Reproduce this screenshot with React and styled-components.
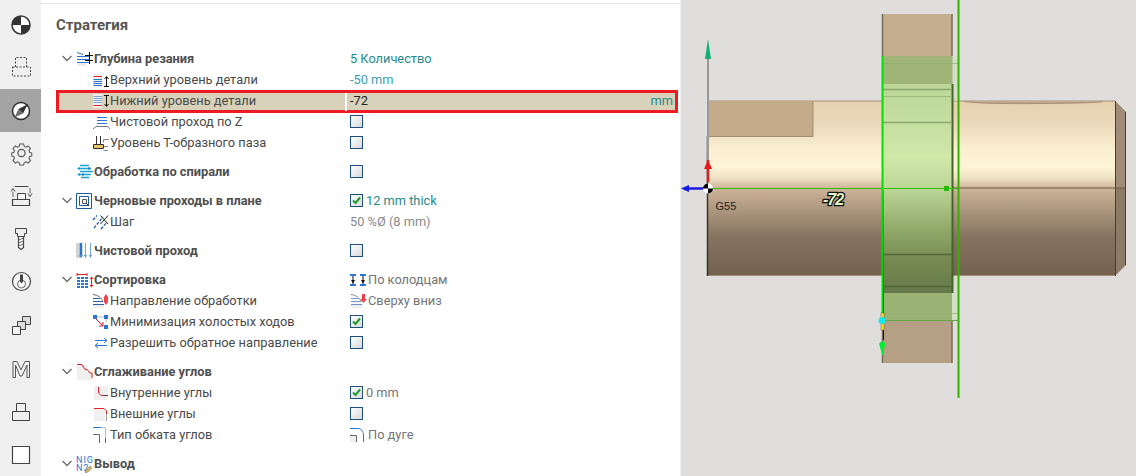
import styled, { createGlobalStyle } from "styled-components";

const GlobalStyle = createGlobalStyle`
  html, body {
    margin: 0;
    padding: 0;
    height: 476px;
    overflow: hidden;
    background: #fff;
  }
`;

const BLUE = "#2a76d2";
const RED = "#e0202a";

// sidebar drawings, 26x26
const sideIcons = {
  origin: (
    <>
      <circle cx="13" cy="13" r="9" fill="#fff" stroke="#3c3c3c" strokeWidth="1.600" />
      <path d="M13 13V4a9 9 0 0 0-9 9zM13 13v9a9 9 0 0 0 9-9z" fill="#333" />
    </>
  ),
  stock: (
    <path
      d="M7.500 12V2.500H18.500V12M4.500 12H22.500V21H4.500Z"
      fill="none"
      stroke="#444"
      strokeDasharray="2 1.500"
    />
  ),
  compass: (
    <>
      <circle cx="13" cy="13" r="8.500" fill="#fff" stroke="#2c2c2c" strokeWidth="1.500" />
      <path d="M20 6L15 15.500L10.500 11Z" fill="#333" />
      <path d="M6.500 19.500L10.500 11L15 15.500Z" fill="#6e6e6e" />
    </>
  ),
  gear: (
    <>
      <path
        d="M11.400 2.500h4.200l.6 2.700 1.900.9 2.400-1.400 2.500 2.900-1.600 2.200.6 1.800 2.400.9v3l-2.400.9-.6 1.800 1.600 2.200-2.500 2.900-2.400-1.400-1.900.9-.6 2.700h-4.200l-.6-2.700-1.900-.9-2.400 1.400-2.500-2.900 1.600-2.200-.6-1.800-2.400-.9v-3l2.400-.9.6-1.800-1.600-2.200 2.500-2.900 2.400 1.400 1.900-.9z"
        transform="translate(1.300 .6) scale(.92)"
        fill="none"
        stroke="#555"
        strokeWidth="1.100"
      />
      <circle cx="13.500" cy="12" r="3.600" fill="none" stroke="#555" strokeWidth="1.200" />
    </>
  ),
  setup: (
    <>
      <path d="M6.500 2.500H20.500" stroke="#444" fill="none" />
      <path d="M9.500 15.500V9.500H17.500V15.500" fill="#f6f6f6" stroke="#444" />
      <path d="M4.500 15.500H21.500V21.500H4.500Z" fill="none" stroke="#444" strokeWidth="1.200" />
      <path d="M5 5V13M22 4V12" stroke="#666" />
      <path d="M3 7.500L5 4.500L7 7.500M20 9.500L22 12.500L24 9.500" fill="#fff" stroke="#444" />
    </>
  ),
  tool: (
    <>
      <path d="M7.500 1.500H18.500V6.500H16.500V9.500H9.500V6.500H7.500Z" fill="#eee" stroke="#444" />
      <path d="M10.500 9.500H15.500V20.500L13 22.500L10.500 20.500Z" fill="#fff" stroke="#444" strokeWidth="1.200" />
      <path d="M10.500 13L15.500 11M10.500 16L15.500 14M10.500 19L15.500 17" stroke="#666" />
    </>
  ),
  dial: (
    <>
      <circle cx="13.500" cy="11.500" r="9" fill="#f6f6f6" stroke="#444" strokeWidth="1.200" />
      <circle cx="13.500" cy="14" r="4" fill="#fff" stroke="#666" />
      <path d="M12 4.500h3v7l-1.500 2l-1.500-2z" fill="#444" />
    </>
  ),
  copies: (
    <>
      <path d="M14.500 3.500H22.500V11.500H14.500Z" fill="#ddd" stroke="#444" />
      <path d="M9.500 8.500H17.500V16.500H9.500Z" fill="#ddd" stroke="#444" />
      <path d="M4.500 13.500H12.500V21.500H4.500Z" fill="#f4f4f4" stroke="#444" />
    </>
  ),
  machine: (
    <path
      d="M5 5.500H9L13 14L17 5.500H21.500V21.500H19V9L14 20H12L7.500 9V21.500H5Z"
      fill="#f4f4f4"
      stroke="#555"
    />
  ),
  stack: (
    <>
      <path d="M8.500 12.500V4.500H17.500V12.500" fill="none" stroke="#444" />
      <path d="M4.500 12.500H21.500V21.500H4.500Z" fill="none" stroke="#444" />
    </>
  ),
  square: <path d="M4.500 4.500H21.500V21.500H4.500Z" fill="#fff" stroke="#444" strokeWidth="1.200" />,
};

// property icons, 18x16
const rowIcons = {
  depth: (
    <>
      <path d="M1 1.500L7 3.500M1 5.500H13M1 8.500H13M1 11.500H13" stroke={BLUE} fill="none" />
      <path d="M1 12h9v3H1z" fill="#eee" />
      <path d="M13.500 1V13M9 4.500H17M9 9.500H17" stroke="#111" />
    </>
  ),
  top: (
    <>
      <path d="M1 2h9v13H1z" fill="#eee" />
      <path d="M1.500 4.500H10" stroke={RED} />
      <path d="M1.500 7.500H10M1.500 9.500H10M1.500 11.500H10M1.500 13.500H10" stroke={BLUE} />
      <path d="M14.500 5V15M12 14.500H17M12.500 7L14.500 4.500L16.500 7" stroke="#111" fill="none" />
    </>
  ),
  bottom: (
    <>
      <path d="M1 1h9v14H1z" fill="#eee" />
      <path d="M1.500 3.500H10M1.500 5.500H10M1.500 7.500H10M1.500 9.500H10" stroke="#7aa6dc" />
      <path d="M1.500 12.500H10" stroke={RED} />
      <path d="M14.500 3V13M12 2.500H17M12.500 11L14.500 13.500L16.500 11" stroke="#111" fill="none" />
    </>
  ),
  finishZ: (
    <>
      <path d="M5 3.500H15M5 6.500H15M5 9.500H15" stroke={BLUE} />
      <path d="M1 15L4 12.500H16L18 15" stroke="#777" fill="none" />
    </>
  ),
  tslot: (
    <>
      <path d="M4.500 1V9M8.500 1V9" stroke="#333" fill="none" />
      <path d="M1.500 9.500H11.500V13.500H1.500Z" fill="#e8c468" stroke="#333" />
      <path d="M17 4.500H11.500V7.500M12 11.500H16M11.500 15.500H16" stroke="#888" fill="none" />
    </>
  ),
  spiral: (
    <>
      <path d="M4 1.500H13M2 4.500H15M4 7.500H17M2 10.500H15M5 13.500H13" stroke="#1a9fd8" strokeWidth="1.300" />
      <path d="M1 4.500L4 3V6ZM1 10.500L4 9V12Z" fill="#1a9fd8" />
      <path d="M13 3V6M7 9V12" stroke="#0d6fb0" />
    </>
  ),
  pocket: (
    <>
      <path d="M.500.500H15.500V15.500H.500Z" fill="#fff" stroke="#1b5c9e" />
      <path d="M3.500 3.500H12.500V12.500H3.500Z" fill="none" stroke="#1b5c9e" />
      <path d="M6.500 6.500H10.500V10.500H6.500Z" fill="none" stroke="#555" />
      <path d="M10 10L13 13" stroke="#333" />
    </>
  ),
  step: (
    <>
      <path d="M1 6L5 1.500M2 14L11 3M9 15L15 8" stroke="#1b5c9e" strokeWidth="1.300" strokeDasharray="3 1.500" />
      <path d="M8.500 1.500L16 10M16 1.500L8.500 10" stroke="#222" />
    </>
  ),
  finish: (
    <>
      <path d="M0 0h4v15H0z" fill="#d4d4d4" />
      <path d="M5 0V14" stroke={BLUE} strokeWidth="2.500" />
      <path d="M9.500 0V13M14.500 0V13" stroke="#7aa6dc" />
      <path d="M3 12L5 15.500L7 12M8 12L9.500 15L11 12M13 12L14.500 15L16 12" fill="#5a92d8" />
    </>
  ),
  sort: (
    <>
      <path d="M1 2.500H11M1 1V4M11 1V4" stroke={RED} fill="none" />
      <path
        d="M1 5h3v2H1zM5 5h3v2H5zM9 5h3v2H9zM1 8h3v2H1zM5 8h3v2H5zM9 8h3v2H9zM1 11h3v2H1zM5 11h3v2H5zM9 11h3v2H9zM1 14h3v2H1zM5 14h3v2H5zM9 14h3v2H9z"
        fill={BLUE}
      />
      <path d="M15.500 5V15" stroke={RED} />
      <path d="M13.500 7L15.500 4.500L17.500 7ZM13.500 13L15.500 15.500L17.500 13Z" fill={RED} />
    </>
  ),
  direction: (
    <>
      <path d="M1 1.500C6 2 10 5 11 9" stroke="#666" fill="none" />
      <path d="M1 5.500H8M1 8.500H11M1 11.500H12" stroke="#2d5f9e" />
      <path d="M1 12h11v3H1z" fill="#eee" />
      <path d="M14 1l2 3v5l-2 3l-2-3V4z" fill="#f0404a" />
    </>
  ),
  directionValue: (
    <>
      <path d="M1 1.500C6 2 10 5 11 9" stroke="#888" fill="none" />
      <path d="M1 5.500H8M1 8.500H11M1 11.500H12" stroke="#6f95c8" />
      <path d="M1 12h11v3H1z" fill="#eee" />
      <path d="M12 1h3v5h2l-3.500 4L10 6h2z" fill="#f0404a" />
    </>
  ),
  rapid: (
    <>
      <path d="M1 1h4v4H1zM12 1h4v4h-4zM12 11h4v4h-4z" fill={BLUE} />
      <path d="M5 3H12M14 5V8" stroke="#bbb" />
      <path d="M4 5L11 12M11 8V12H7" stroke={RED} fill="none" />
    </>
  ),
  reverse: (
    <>
      <path d="M3 5.500H15M12 3L15 5.500L12 8" stroke={BLUE} fill="none" />
      <path d="M15 10.500H3M6 8L3 10.500L6 13" stroke={BLUE} fill="none" />
    </>
  ),
  smooth: (
    <>
      <path d="M1 1h10v3l3 3h3v9H1z" fill="#f0f0f0" />
      <path d="M1 .500H6L9 5.500H11L14 9H16V14" stroke={RED} fill="none" />
    </>
  ),
  inner: (
    <>
      <path d="M2 1h14v14H2z" fill="#f0f0f0" />
      <path d="M6.500 2V8L9 10.500H12" stroke={RED} fill="none" />
      <path d="M12 10.500H16" stroke="#444" />
    </>
  ),
  outer: (
    <>
      <path d="M2 2h11v13H2z" fill="#f0f0f0" />
      <path d="M2 2.500H12L14.500 5V8" stroke={RED} fill="none" />
      <path d="M14.500 8V15" stroke="#999" />
    </>
  ),
  corner: (
    <>
      <path d="M1 .500H9" stroke={BLUE} />
      <path d="M9 .500H13.500V11" stroke="#bbb" fill="none" />
      <path d="M13.500 11V16" stroke={BLUE} />
      <path d="M1 7.500H7.500V16" stroke="#666" fill="none" />
    </>
  ),
  wells: (
    <>
      <path d="M0 2h6v2H0zM10 2h6v2h-6zM0 12h6v2H0zM10 12h6v2h-6z" fill={BLUE} />
      <path d="M3 4V12M13 4V12" stroke="#111" />
      <path d="M1 8h4l-2 3.500zM11 8h4l-2 3.500z" fill="#111" />
    </>
  ),
  arc: (
    <>
      <path d="M0 1.500H8C11 1.500 13.500 4 13.500 8V15" stroke={BLUE} fill="none" />
      <path d="M0 8h7v7H0z" fill="#eee" />
      <path d="M0 8.500H6.500V15" stroke="#666" fill="none" />
    </>
  ),
};

const sections = [
  [
    { label: "Глубина резания", icon: "depth", group: true, open: true, value: "5 Количество", tone: "teal" },
    { label: "Верхний уровень детали", icon: "top", value: "-50 mm", tone: "sky" },
    { label: "Нижний уровень детали", icon: "bottom", active: true, value: "-72", unit: "mm" },
    { label: "Чистовой проход по Z", icon: "finishZ", check: "off" },
    { label: "Уровень Т-образного паза", icon: "tslot", check: "off" },
  ],
  [{ label: "Обработка по спирали", icon: "spiral", group: true, check: "off" }],
  [
    { label: "Черновые проходы в плане", icon: "pocket", group: true, open: true, check: "on", value: "12 mm thick", tone: "teal" },
    { label: "Шаг", icon: "step", value: "50 %Ø (8 mm)", tone: "muted" },
  ],
  [{ label: "Чистовой проход", icon: "finish", group: true, check: "off" }],
  [
    { label: "Сортировка", icon: "sort", group: true, open: true, valueIcon: "wells", value: "По колодцам", tone: "grey" },
    { label: "Направление обработки", icon: "direction", valueIcon: "directionValue", value: "Сверху вниз", tone: "grey" },
    { label: "Минимизация холостых ходов", icon: "rapid", check: "on" },
    { label: "Разрешить обратное направление", icon: "reverse", check: "off" },
  ],
  [
    { label: "Сглаживание углов", icon: "smooth", group: true, open: true },
    { label: "Внутренние углы", icon: "inner", check: "on", value: "0 mm", tone: "grey" },
    { label: "Внешние углы", icon: "outer", check: "off" },
    { label: "Тип обката углов", icon: "corner", valueIcon: "arc", value: "По дуге", tone: "grey" },
  ],
  [{ label: "Вывод", icon: "output", group: true, open: true }],
];

const sideItems = ["origin", "stock", "compass", "gear", "setup", "tool", "dial", "copies", "machine", "stack", "square"];

function RowIcon({ name }) {
  if (name === "output") {
    return (
      <OutputIcon>
        <span>NIG</span>
        <span>N2</span>
        <Pencil viewBox="0 0 8 8">
          <path d="M0 8L1 5L5 1L7 3L3 7Z" fill="#d8b060" stroke="#777" strokeWidth="0.500" />
        </Pencil>
      </OutputIcon>
    );
  }
  return <IconSvg viewBox="0 0 18 16">{rowIcons[name]}</IconSvg>;
}

function Row({ row }) {
  return (
    <RowBox $active={row.active}>
      <Label $group={row.group}>
        {row.group && (
          <Chevron viewBox="0 0 14 10">
            {row.open && <path d="M1.500 2L6 6.500L10.500 2" fill="none" stroke="#6b6b6b" strokeWidth="1.300" />}
          </Chevron>
        )}
        <RowIcon name={row.icon} />
        <LabelText $group={row.group}>{row.label}</LabelText>
      </Label>
      <Value>
        {row.check && (
          <CheckBox>
            {row.check === "on" && (
              <svg width="11" height="11" viewBox="0 0 11 11">
                <path d="M2 5.500L4.500 8L9 2.500" fill="none" stroke="#1f9a2c" strokeWidth="2" />
              </svg>
            )}
          </CheckBox>
        )}
        {row.valueIcon && <ValueIcon viewBox="0 0 18 16">{rowIcons[row.valueIcon]}</ValueIcon>}
        {row.value && <ValueText $tone={row.tone}>{row.value}</ValueText>}
        {row.unit && <Unit>{row.unit}</Unit>}
      </Value>
    </RowBox>
  );
}

function Scene() {
  return (
    <SceneSvg viewBox="0 0 456 476">
      <defs>
        <linearGradient id="shaft" x1="0" y1="101" x2="0" y2="276" gradientUnits="userSpaceOnUse">
          <stop offset="0" stopColor="#e6d0ae" />
          <stop offset="0.14" stopColor="#ecd9bb" />
          <stop offset="0.28" stopColor="#fbf0d2" />
          <stop offset="0.38" stopColor="#fdf3d6" />
          <stop offset="0.44" stopColor="#f0e2c4" />
          <stop offset="0.5" stopColor="#cdb398" />
          <stop offset="0.62" stopColor="#ad977f" />
          <stop offset="0.78" stopColor="#85735f" />
          <stop offset="1" stopColor="#746251" />
        </linearGradient>
        <linearGradient id="band" x1="0" y1="84" x2="0" y2="293" gradientUnits="userSpaceOnUse">
          <stop offset="0" stopColor="#bcd698" />
          <stop offset="0.15" stopColor="#c3dc9f" />
          <stop offset="0.35" stopColor="#d0e8a8" />
          <stop offset="0.5" stopColor="#bcd698" />
          <stop offset="0.7" stopColor="#90a868" />
          <stop offset="0.85" stopColor="#758a52" />
          <stop offset="1" stopColor="#66794a" />
        </linearGradient>
        <linearGradient id="edge" x1="0" y1="190" x2="0" y2="300" gradientUnits="userSpaceOnUse">
          <stop offset="0" stopColor="#7a9a5c" />
          <stop offset="1" stopColor="#111" />
        </linearGradient>
      </defs>
      <path d="M.500 0V476" stroke="#f0f0f0" />
      <rect x="202" y="14" width="70" height="349" fill="#c4ae8e" />
      <rect x="202" y="320" width="70" height="43" fill="#b5a085" />
      <path d="M202.500 14V56M202.500 320V363M272 14V84M272 320V363" stroke="#7a6a58" strokeWidth="1.500" />
      <rect x="27" y="101" width="408" height="175" fill="url(#shaft)" />
      <path d="M27 101H435M27 275.500H435" stroke="#a4907a" />
      <path d="M435 101L446 112V265L435 276Z" fill="#8d7b68" />
      <path d="M435 101L446 112V188H435Z" fill="#a08c78" />
      <path d="M284 101.500Q300 104 360 103.500T423 101.500" fill="#bda88c" stroke="#a4907a" />
      <path d="M435.500 101V276M445.500 112V265" stroke="#4a3c2e" />
      <rect x="27" y="101" width="106" height="36" fill="#c4ab8a" />
      <path d="M27 136.500H133V101" fill="none" stroke="#a18d72" />
      <path d="M27.500 136V276" stroke="#3e3228" strokeWidth="1.500" />
      <path d="M272 188H446" stroke="#6d5844" />
      <rect x="203" y="56" width="69" height="28" fill="#9fb476" />
      <rect x="203" y="84" width="69" height="209" fill="url(#band)" />
      <rect x="203" y="293" width="69" height="27" fill="#9ab274" />
      <rect x="272" y="56" width="6" height="45" fill="#cfe0bd" opacity="0.7" />
      <rect x="272" y="276" width="6" height="44" fill="#cfe0bd" opacity="0.7" />
      <path d="M272.500 84V293" stroke="#47632e" strokeWidth="2" />
      <path d="M203 63.500H278M203 96.500H272M203 313.500H278" stroke="#8fae70" opacity="0.7" />
      <path d="M203 89.500H272M203 122.500H272" stroke="#8ba56c" strokeWidth="1.500" />
      <path d="M203 254.500H272M203 286.500H272" stroke="#4f6636" strokeWidth="1.500" />
      <path d="M202 320.500H278" stroke="#63a844" />
      <path d="M278.500 0V398" stroke="#33b300" strokeWidth="2" />
      <path d="M33 188.500H278" stroke="#2fbb00" />
      <rect x="264" y="186" width="5" height="5" fill="#22bb00" />
      <rect x="203" y="190" width="1" height="150" fill="url(#edge)" />
      <path d="M202.500 56V313" stroke="#00e000" strokeWidth="2" />
      <rect x="201" y="313" width="3" height="17" fill="#ffe000" stroke="#666" strokeWidth="0.500" />
      <circle cx="202" cy="320.500" r="3.500" fill="#10e8f0" />
      <path d="M202 341L205.500 343.500L204 349L202.500 356L200.500 349L199 343.500Z" fill="#00ee30" />
      <path d="M28 58V160" stroke="#999" strokeWidth="2" />
      <path d="M28 39L31 59H25Z" fill="#10b070" />
      <path d="M28 160V182" stroke="#e02020" strokeWidth="2.500" />
      <path d="M28 160L32 169H24Z" fill="#e81818" />
      <path d="M8 188.500H24" stroke="#1a1ae0" strokeWidth="2.500" />
      <path d="M1 188.500L9 185V192Z" fill="#1818e8" />
      <circle cx="28" cy="188.500" r="5" fill="#fff" />
      <path d="M28 188.500V183.500A5 5 0 0 0 23 188.500ZM28 188.500V193.500A5 5 0 0 0 33 188.500Z" fill="#000" />
      <SceneLabel x="35.500" y="210">G55</SceneLabel>
      <SceneValue x="143" y="205">-72</SceneValue>
    </SceneSvg>
  );
}

export default function App() {
  return (
    <>
      <GlobalStyle />
      <Page>
        <SideBar>
          {sideItems.map((name) => (
            <SideButton key={name} $active={name === "compass"}>
              <svg width="26" height="26" viewBox="0 0 26 26">
                {sideIcons[name]}
              </svg>
            </SideButton>
          ))}
        </SideBar>
        <Panel>
          <Title>Стратегия</Title>
          <Sections>
            {sections.map((rows, i) => (
              <Section key={i}>
                {rows.map((row) => (
                  <Row key={row.label} row={row} />
                ))}
              </Section>
            ))}
          </Sections>
        </Panel>
        <Viewport>
          <Scene />
        </Viewport>
      </Page>
    </>
  );
}

const Page = styled.div`
  display: flex;
  width: 1136px;
  height: 476px;
  overflow: hidden;
  font-family: Roboto, "Liberation Sans", sans-serif;
  font-size: 12.8px;
`;

const SideBar = styled.div`
  display: flex;
  flex-direction: column;
  flex: none;
  width: 41px;
  padding-top: 3px;
  background: #f0f0f0;
`;

const SideButton = styled.div`
  display: flex;
  flex: none;
  align-items: center;
  justify-content: center;
  height: 43px;
  background: ${(p) => (p.$active ? "#a3a3a3" : "transparent")};
`;

const Panel = styled.div`
  flex: none;
  box-sizing: border-box;
  width: 639px;
  height: 476px;
  padding: 3px 2px 0 15px;
  overflow: hidden;
  background: #fff;
  &::before {
    content: "";
    display: block;
    height: 1px;
    margin: 0 -2px 0 -15px;
    background: #e6e6e6;
  }
`;

const Title = styled.div`
  height: 44px;
  padding-top: 13px;
  box-sizing: border-box;
  color: #555;
  font-size: 15px;
  font-weight: 700;
  line-height: 17px;
`;

const Sections = styled.div`
  display: flex;
  flex-direction: column;
  gap: 8px;
`;

const Section = styled.div`
  display: flex;
  flex-direction: column;
`;

const RowBox = styled.div`
  position: relative;
  display: grid;
  grid-template-columns: 294px 1fr;
  align-items: center;
  height: 21px;
  isolation: isolate;
  ${(p) =>
    p.$active &&
    `
    &::before {
      content: "";
      position: absolute;
      inset: 0 0 -2px 0;
      z-index: -1;
      border: 3px solid #ed1c24;
      background: #d9d2ba;
    }
    &::after {
      content: "";
      position: absolute;
      left: 289px;
      top: 3px;
      width: 2px;
      height: 18px;
      background: #fff;
    }
  `}
`;

const Label = styled.div`
  display: flex;
  align-items: center;
  padding-left: ${(p) => (p.$group ? "5px" : "36px")};
`;

const Chevron = styled.svg`
  flex: none;
  width: 14px;
  height: 10px;
  margin-right: 1px;
`;

const IconSvg = styled.svg`
  flex: none;
  width: 18px;
  height: 16px;
`;

const OutputIcon = styled.div`
  position: relative;
  display: flex;
  flex: none;
  flex-direction: column;
  width: 18px;
  color: #2a76d2;
  font-size: 9px;
  line-height: 8px;
  letter-spacing: 1px;
`;

const Pencil = styled.svg`
  position: absolute;
  left: 9px;
  bottom: -1px;
  width: 8px;
  height: 8px;
`;

const LabelText = styled.span`
  color: ${(p) => (p.$group ? "#4f4f4f" : "#4a4a4a")};
  font-weight: ${(p) => (p.$group ? 700 : 400)};
  white-space: nowrap;
`;

const Value = styled.div`
  display: flex;
  align-items: center;
  height: 100%;
`;

const CheckBox = styled.div`
  display: flex;
  flex: none;
  align-items: center;
  justify-content: center;
  box-sizing: border-box;
  width: 13px;
  height: 13px;
  margin-right: 3px;
  border: 1px solid #1d4f80;
  background: linear-gradient(135deg, #fff, #d8d8d8);
`;

const ValueIcon = styled.svg`
  flex: none;
  width: 18px;
  height: 16px;
`;

const toneColors = {
  teal: "#1f8a8c",
  sky: "#3f9eae",
  muted: "#8a8a8a",
  grey: "#757575",
};

const ValueText = styled.span`
  color: ${(p) => toneColors[p.$tone] || "#222"};
  white-space: nowrap;
`;

const Unit = styled.span`
  margin-left: auto;
  padding-right: 5px;
  color: #1f8a8c;
`;

const Viewport = styled.div`
  flex: none;
  width: 456px;
  height: 476px;
  background: #dfdedc;
`;

const SceneSvg = styled.svg`
  display: block;
  width: 456px;
  height: 476px;
`;

const SceneLabel = styled.text`
  fill: #222;
  font-family: "Liberation Sans", sans-serif;
  font-size: 11px;
`;

const SceneValue = styled.text`
  fill: #dff5c8;
  stroke: #111;
  stroke-width: 2.5px;
  paint-order: stroke;
  font-family: "Liberation Sans", sans-serif;
  font-size: 16px;
  font-style: italic;
  font-weight: 700;
  letter-spacing: -1px;
`;
